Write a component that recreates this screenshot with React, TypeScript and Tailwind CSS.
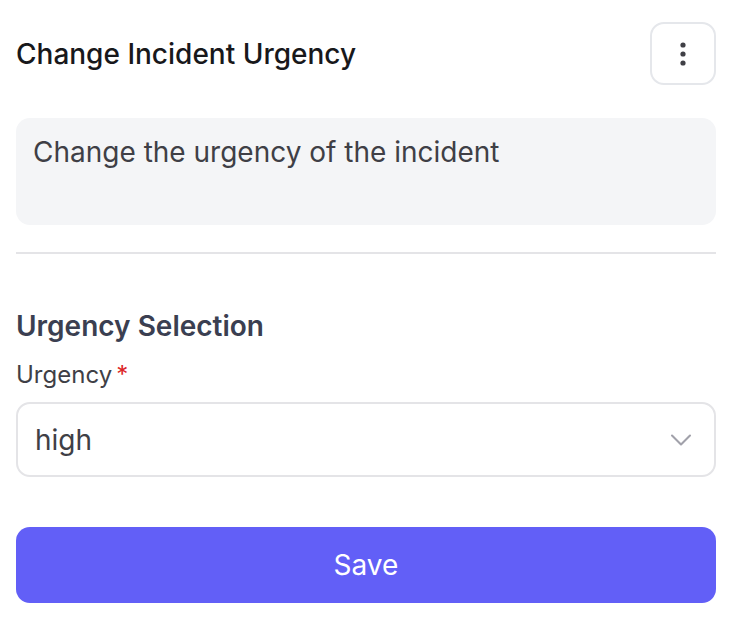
import React from 'react'
import { ChevronDown } from 'lucide-react'

export default function App() {
  return (
    <div className="min-h-screen bg-white pl-4 pr-5 pt-[22px] font-['Inter',sans-serif]">
      {/* header */}
      <div className="flex items-center justify-between">
        <h1 className="text-[28px] font-medium text-[#18181b]">Change Incident Urgency</h1>
        <button className="flex h-[63px] w-[66px] items-center justify-center rounded-[14px] border-2 border-[#e5e7eb] bg-white">
          <svg width="6" height="24" viewBox="0 0 6 24">
            <circle cx="3" cy="3" r="2.6" fill="#3f3f46" />
            <circle cx="3" cy="12" r="2.6" fill="#3f3f46" />
            <circle cx="3" cy="21" r="2.6" fill="#3f3f46" />
          </svg>
        </button>
      </div>

      {/* description */}
      <div className="mt-[33px] h-[107px] rounded-[14px] bg-[#f4f5f7] px-[17px] pt-[14px] text-[28px] leading-[40px] text-[#3f3f46]">
        Change the urgency of the incident
      </div>

      <div className="mt-[27px] h-[2px] bg-[#e4e4e7]" />

      {/* form */}
      <h2 className="mt-[54px] text-[28px] font-semibold leading-[36px] text-[#3b3f51]">Urgency Selection</h2>
      <label className="mt-[15px] block text-[24px] leading-[32px] text-[#3f3f46]">
        Urgency<span className="ml-1 text-[#dc2626]">*</span>
      </label>
      <div className="mt-[11px] flex h-[75px] items-center justify-between rounded-[14px] border-2 border-[#e4e4e7] bg-white pl-[17px] pr-[15px]">
        <span className="text-[28px] text-[#3f3f46]">high</span>
        <ChevronDown size={36} strokeWidth={1.4} className="text-[#a1a1aa]" />
      </div>

      <button className="mt-[50px] flex h-[76px] w-full items-center justify-center rounded-[14px] bg-[#625ff7] text-[28px] text-white">
        Save
      </button>
    </div>
  )
}
